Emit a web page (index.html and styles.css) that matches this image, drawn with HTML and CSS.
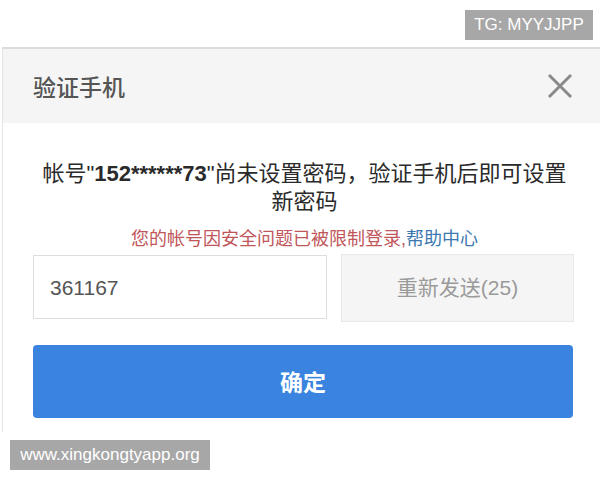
FILE: index.html
```html
<!DOCTYPE html>
<html lang="zh-CN">
<head>
<meta charset="utf-8">
<link rel="stylesheet" href="styles.css">
</head>
<body>
<div class="topbar"><span class="badge">TG: MYYJJPP</span></div>
<div class="dialog">
  <div class="header">
    <span class="title">验证手机</span>
    <svg class="close" width="26" height="26" viewBox="0 0 26 26"><path d="M2 2 L24 24 M24 2 L2 24" stroke="#8a8a8a" stroke-width="3" fill="none"/></svg>
  </div>
  <div class="content">
    <p class="msg">帐号"<b>152******73</b>"尚未设置密码，验证手机后即可设置<br>新密码</p>
    <p class="warn">您的帐号因安全问题已被限制登录,<span class="help">帮助中心</span></p>
    <div class="row">
      <div class="input">361167</div>
      <div class="resend">重新发送(25)</div>
    </div>
    <div class="confirm">确定</div>
  </div>
</div>
<div class="footer"><span class="mark">www.xingkongtyapp.org</span></div>
</body>
</html>
```
FILE: styles.css
```css
html, body { margin: 0; padding: 0; background: #fff; }
body { font-family: "Liberation Sans", "Noto Sans CJK SC", sans-serif; width: 600px; height: 480px; overflow: hidden; }
.topbar { height: 47px; display: flex; justify-content: flex-end; align-items: flex-start; }
.badge { margin-top: 10px; margin-right: 7px; width: 128px; height: 30px; background: #a7a7a7; color: #fff; font-size: 17px; line-height: 30px; text-align: center; }
.dialog { margin-left: 2px; height: 383px; border-top: 2px solid #dcdcdc; border-left: 1px solid #e4e4e4; background: #fff; }
.header { height: 74px; background: #f5f5f5; display: flex; align-items: center; justify-content: space-between; padding: 0 27px 0 30px; }
.title { font-family: "Noto Sans CJK SC", serif; font-size: 23px; color: #555; font-weight: 500; }
.close { display: block; }
.content { padding: 37px 24px 0 30px; }
.msg { margin: 0; text-align: center; font-size: 22px; line-height: 28px; color: #2a2a2a; }
.msg b { font-weight: bold; }
.warn { margin: 11px 0 0; text-align: center; font-size: 18px; line-height: 24px; color: #c0565a; }
.help { color: #3c78b0; }
.row { display: flex; align-items: flex-start; gap: 14px; margin-top: 4px; }
.input { width: 276px; height: 62px; border: 1px solid #dedede; padding-left: 16px; font-size: 21px; line-height: 64px; color: #555; }
.resend { width: 231px; height: 66px; border: 1px solid #e8e8e8; background: #f5f5f5; font-size: 21px; line-height: 66px; color: #9a9a9a; text-align: center; margin-top: -1px; }
.confirm { margin-top: 23px; width: 540px; height: 73px; background: #3a84e0; border-radius: 4px; color: #fff; font-family: "Noto Sans CJK SC", serif; font-weight: bold; font-size: 23px; line-height: 73px; text-align: center; }
.footer { padding: 8px 0 0 10px; }
.mark { display: inline-block; width: 200px; height: 30px; background: #a7a7a7; color: #fff; font-size: 17px; line-height: 30px; text-align: center; }
```
